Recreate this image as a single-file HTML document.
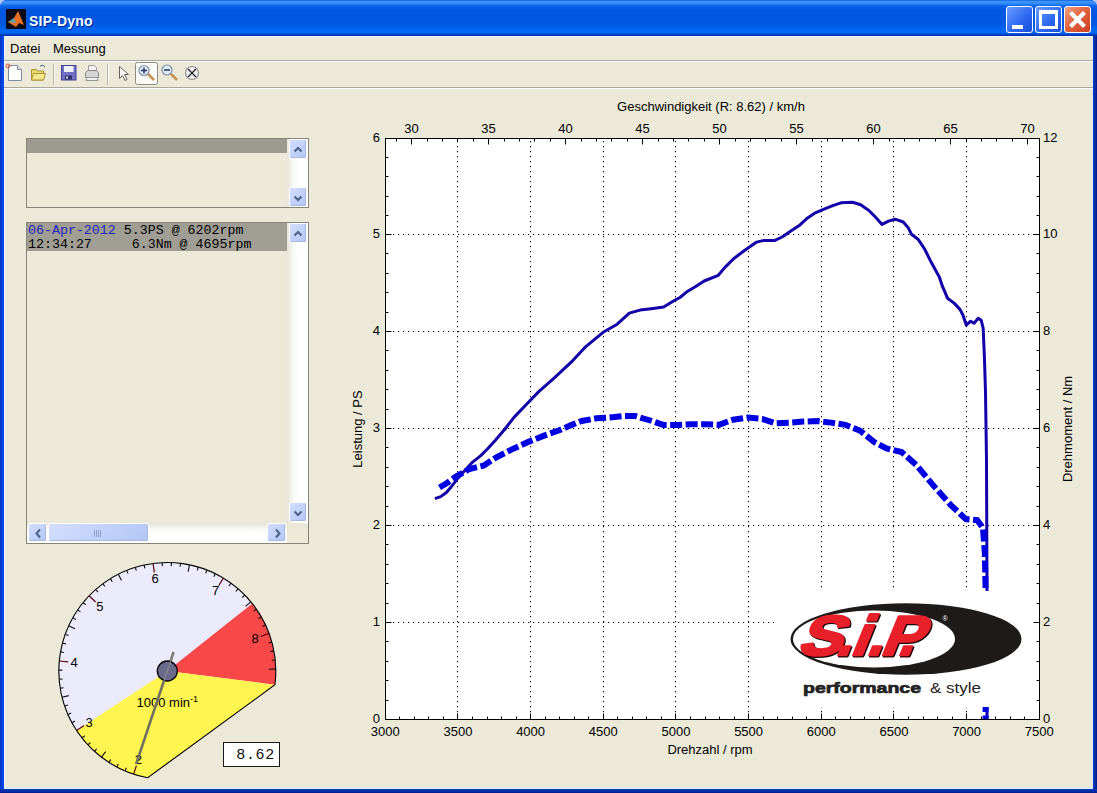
<!DOCTYPE html>
<html><head><meta charset="utf-8"><style>
html,body{margin:0;padding:0;width:1097px;height:793px;overflow:hidden;background:#b8c8f0;}
*{box-sizing:border-box;}
.f{font-family:"Liberation Sans",sans-serif;}
#win{position:absolute;left:0;top:0;width:1097px;height:793px;background:#0a3fd8;border-radius:7px 7px 0 0;overflow:hidden;}
#title{position:absolute;left:0;top:0;width:1097px;height:36px;
 background:linear-gradient(to bottom,#0050c8 0px,#3a92ff 1px,#3a92ff 3px,#0a62ea 6px,#0058e2 10px,#0058e2 24px,#0068f6 30px,#0066f2 33px,#0036b8 35px,#0030b0 36px);}
#client{position:absolute;left:4px;top:36px;width:1089px;height:753px;background:#ece9d8;}
.ttl{position:absolute;left:29px;top:12.6px;color:#f4ffff;font-weight:bold;font-size:14px;letter-spacing:0.2px;text-shadow:1px 1px 0 #0a1e8c;}
.btn{position:absolute;top:6px;width:27px;height:27px;border:1px solid #fff;border-radius:3px;}
.menu{position:absolute;top:5px;font-size:13px;color:#000;}
</style></head><body>
<div id="win" class="f">
 <div id="title">
  <div style="position:absolute;left:6px;top:9px;width:20px;height:20px;background:#0b0b18;">
   <svg width="20" height="20"><path d="M2 13 L8 9 L12 2 L15 9 L18 16 L13 14 L10 18 Z" fill="#e87020"/><path d="M2 13 L8 9 L10 14 Z" fill="#60a0b0"/></svg>
  </div>
  <div class="ttl">SIP-Dyno</div>
  <div class="btn" style="left:1006px;background:linear-gradient(135deg,#6a9cff,#2a66f0 60%,#1c50d8);"><div style="position:absolute;left:5px;top:18px;width:11px;height:4px;background:#fff;"></div></div>
  <div class="btn" style="left:1035px;background:linear-gradient(135deg,#6a9cff,#2a66f0 60%,#1c50d8);"><div style="position:absolute;left:3px;top:3px;width:19px;height:19px;border:3px solid #fff;border-top-width:4px;"></div></div>
  <div class="btn" style="left:1064px;background:linear-gradient(135deg,#f0a080,#e06040 50%,#c84020);">
   <svg width="25" height="25" style="position:absolute;left:0;top:0"><path d="M5.5 5.5 L19.5 19.5 M19.5 5.5 L5.5 19.5" stroke="#fff" stroke-width="4.2"/></svg></div>
 </div>
 <div style="position:absolute;left:0;top:36px;width:4px;height:757px;background:linear-gradient(to right,#0030c8,#0044e0 50%,#0a48e8);"></div>
 <div style="position:absolute;left:1093px;top:36px;width:4px;height:757px;background:linear-gradient(to right,#0a3ac0,#0a2ea8 50%,#001a90);"></div>
 <div style="position:absolute;left:0;top:789px;width:1097px;height:4px;background:linear-gradient(to bottom,#0a3ab8,#0a2ea8 50%,#001a90);"></div>
 <div id="client">
  <div style="position:absolute;left:0;top:0;width:1089px;height:1px;background:#f4f8ff;"></div>
  <div style="position:absolute;left:0;top:0;width:1px;height:753px;background:#e4f0fa;"></div>
  <div style="position:absolute;left:1088px;top:0;width:1px;height:753px;background:#dcecfc;"></div>
  <div style="position:absolute;left:0;top:751px;width:1089px;height:2px;background:#dcecfc;"></div>
  <div class="menu" style="left:6px;">Datei</div>
  <div class="menu" style="left:49px;">Messung</div>
  <div style="position:absolute;left:0;top:24px;width:1089px;height:1px;background:#aca899;"></div>
  <div style="position:absolute;left:0;top:25px;width:1089px;height:1px;background:#fff;"></div>
  <div style="position:absolute;left:0;top:51px;width:1089px;height:1px;background:#aca899;"></div>
  <div style="position:absolute;left:0;top:52px;width:1089px;height:1px;background:#fff;"></div>
 </div>
<svg width="220" height="28" style="position:absolute;left:0;top:60px">
<path d="M8.5 5.5h9l4 4v11h-13z" fill="#fff" stroke="#7a8aa0"/><path d="M17.5 5.5v4h4" fill="#e8e8e8" stroke="#7a8aa0"/><circle cx="8" cy="6" r="2" fill="none" stroke="#e05030" stroke-width="1"/>
<path d="M31.5 9.5h5l1 1.5h6v9h-12z" fill="#e8d870" stroke="#a89030"/><path d="M33.5 13.5h12l-2 6.5h-12z" fill="#f4e88c" stroke="#a89030"/><path d="M40 6 q3 -2 5 1" stroke="#406080" fill="none"/>
<path d="M53.5 4v21" stroke="#b8b4a0"/><path d="M54.5 4v21" stroke="#fff"/>
<rect x="61.5" y="5.5" width="14.5" height="14.5" fill="#7070c8" stroke="#404090"/><rect x="64" y="6" width="9.5" height="6" fill="#f0f0fa"/><rect x="65" y="15.5" width="7" height="4" fill="#303068"/><rect x="66" y="16.5" width="2" height="2" fill="#d0d0e8"/>
<path d="M88.5 5.5h6l2 2v5h-8z" fill="#f4f4f4" stroke="#a0a0a0"/><path d="M85.5 12.5l2-2h9l2 2v5h-13z" fill="#d4d4d4" stroke="#888"/><path d="M87 17.5h10l1 3h-12z" fill="#f0f0f0" stroke="#999"/>
<path d="M107.5 4v21" stroke="#b8b4a0"/><path d="M108.5 4v21" stroke="#fff"/>
<path d="M119.5 6.5v12l3-3 2.5 5 2-1-2.5-5h4z" fill="#fff" stroke="#606060"/>
<rect x="135.5" y="2.5" width="22" height="22" rx="2" fill="#fafaf6" stroke="#8c8c80"/>
<path d="M148 14 l6 6" stroke="#c89050" stroke-width="2.5"/><circle cx="144" cy="10.5" r="5" fill="#dfefff" stroke="#8090a0" stroke-width="1.2"/><path d="M141 10.5h6M144 7.5v6" stroke="#203060" stroke-width="1.5"/>
<path d="M171 14 l6 6" stroke="#c89050" stroke-width="2.5"/><circle cx="167" cy="10" r="5" fill="#dfefff" stroke="#8090a0" stroke-width="1.2"/><path d="M164 10h6" stroke="#203060" stroke-width="1.5"/>
<circle cx="192" cy="13" r="6.5" fill="#f0f0f0" stroke="#909090" stroke-width="1.2"/><path d="M188 9l8 8M196 9l-8 8" stroke="#202020" stroke-width="1.2"/>
</svg>
<div style="position:absolute;left:26px;top:138px;width:283px;height:70px;border:1px solid #858579;background:#ece9d8;"></div>
<div style="position:absolute;left:27px;top:139px;width:260px;height:14px;background:#9d9b90;"></div>
<div style="position:absolute;left:287px;top:139px;width:21px;height:68px;background:linear-gradient(to right,#e6e4d8,#f8f8f4 30%,#fff 55%);"></div>
<div style="position:absolute;border:1px solid #fff;border-radius:2px;background:linear-gradient(135deg,#d4defc 0%,#c2d2fa 50%,#b2c6f6 100%);box-shadow:inset -1px -1px 0 #a8b8e0;left:289px;top:139px;width:18px;height:20px;"><svg width="18" height="20" style="position:absolute;left:0;top:0"><path d="M4.5 11.5 L8 8 L11.5 11.5" stroke="#4d6185" stroke-width="2" fill="none"/></svg></div>
<div style="position:absolute;border:1px solid #fff;border-radius:2px;background:linear-gradient(135deg,#d4defc 0%,#c2d2fa 50%,#b2c6f6 100%);box-shadow:inset -1px -1px 0 #a8b8e0;left:289px;top:187px;width:18px;height:20px;"><svg width="18" height="20" style="position:absolute;left:0;top:0"><path d="M4.5 8.5 L8 12 L11.5 8.5" stroke="#4d6185" stroke-width="2" fill="none"/></svg></div>
<div style="position:absolute;left:26px;top:222px;width:283px;height:322px;border:1px solid #858579;background:#ece9d8;"></div>
<div style="position:absolute;left:27px;top:223px;width:260px;height:28px;background:#a09e94;"></div>
<div style="position:absolute;left:287px;top:223px;width:21px;height:300px;background:linear-gradient(to right,#e6e4d8,#f8f8f4 30%,#fff 55%);"></div>
<div style="position:absolute;border:1px solid #fff;border-radius:2px;background:linear-gradient(135deg,#d4defc 0%,#c2d2fa 50%,#b2c6f6 100%);box-shadow:inset -1px -1px 0 #a8b8e0;left:289px;top:223px;width:18px;height:20px;"><svg width="18" height="20" style="position:absolute;left:0;top:0"><path d="M4.5 11.5 L8 8 L11.5 11.5" stroke="#4d6185" stroke-width="2" fill="none"/></svg></div>
<div style="position:absolute;border:1px solid #fff;border-radius:2px;background:linear-gradient(135deg,#d4defc 0%,#c2d2fa 50%,#b2c6f6 100%);box-shadow:inset -1px -1px 0 #a8b8e0;left:289px;top:502px;width:18px;height:20px;"><svg width="18" height="20" style="position:absolute;left:0;top:0"><path d="M4.5 8.5 L8 12 L11.5 8.5" stroke="#4d6185" stroke-width="2" fill="none"/></svg></div>
<div style="position:absolute;left:27px;top:523px;width:260px;height:20px;background:linear-gradient(to bottom,#e6e4d8,#f8f8f4 30%,#fff 55%);"></div>
<div style="position:absolute;border:1px solid #fff;border-radius:2px;background:linear-gradient(135deg,#d4defc 0%,#c2d2fa 50%,#b2c6f6 100%);box-shadow:inset -1px -1px 0 #a8b8e0;left:28px;top:523px;width:19px;height:19px;"><svg width="19" height="19" style="position:absolute;left:0;top:0"><path d="M11 5.5 L7.5 9.5 L11 13.5" stroke="#4d6185" stroke-width="2" fill="none"/></svg></div>
<div style="position:absolute;border:1px solid #fff;border-radius:2px;background:linear-gradient(135deg,#d4defc 0%,#c2d2fa 50%,#b2c6f6 100%);box-shadow:inset -1px -1px 0 #a8b8e0;left:48px;top:523px;width:101px;height:19px;"><svg width="101" height="19" style="position:absolute;left:0;top:0"><path d="M45.5 6v7M47.5 6v7M49.5 6v7M51.5 6v7" stroke="#8ea2d0" stroke-width="1"/></svg></div>
<div style="position:absolute;border:1px solid #fff;border-radius:2px;background:linear-gradient(135deg,#d4defc 0%,#c2d2fa 50%,#b2c6f6 100%);box-shadow:inset -1px -1px 0 #a8b8e0;left:267px;top:523px;width:19px;height:19px;"><svg width="19" height="19" style="position:absolute;left:0;top:0"><path d="M8 5.5 L11.5 9.5 L8 13.5" stroke="#4d6185" stroke-width="2" fill="none"/></svg></div>
<div style="position:absolute;left:28px;top:224px;font-family:'Liberation Mono',monospace;font-size:13.3px;line-height:13.5px;white-space:pre;color:#000;"><span style="color:#2424b8">06-Apr-2012</span> 5.3PS @ 6202rpm
12:34:27     6.3Nm @ 4695rpm</div>
<div style="position:absolute;left:223px;top:742px;width:57px;height:25px;border:1px solid #1a1a1a;background:#fff;"></div>
<div style="position:absolute;left:226px;top:747px;width:49px;text-align:right;font-family:'Liberation Mono',monospace;font-size:15px;line-height:18px;color:#111;letter-spacing:0.7px;margin-right:-0.7px;">8.62</div>
 <svg width="1097" height="793" style="position:absolute;left:0;top:0">
<rect x="385.5" y="138.5" width="654.0" height="581.0" fill="#fff"/>
<path d="M457.5 141V719.5M530.5 141V719.5M603.5 141V719.5M675.5 141V719.5M748.5 141V719.5M821.5 141V719.5M893.5 141V719.5M966.5 141V719.5M388 622.5H1039.5M388 525.5H1039.5M388 428.5H1039.5M388 331.5H1039.5M388 234.5H1039.5" stroke="#000" stroke-width="1.1" stroke-dasharray="1.2 3.8" fill="none"/>
<polyline points="434.9,498.6 440.7,496.6 446.4,492.5 451.3,486.7 457.0,479.3 464.4,471.1 472.6,462.1 480.8,455.6 487.4,449.0 495.6,440.0 505.0,429.0 514.2,417.1 526.3,404.5 538.5,391.9 554.6,377.7 572.8,360.6 584.9,347.4 603.1,332.3 617.2,324.2 629.3,313.1 640.0,310.1 651.3,308.7 663.6,307.0 674.3,300.5 680.0,297.5 687.7,291.2 695.3,286.8 704.2,281.0 718.3,275.3 724.7,267.6 733.6,258.7 743.8,251.0 756.6,242.1 763.0,240.6 774.4,240.6 782.1,237.0 792.3,230.0 800.0,224.9 807.6,217.9 815.3,212.8 824.6,208.9 832.8,205.6 841.0,202.8 852.5,202.3 860.7,204.8 868.9,210.5 875.4,217.0 882.0,224.4 888.5,221.1 895.1,219.2 903.3,222.0 908.2,227.7 911.5,234.3 918.0,239.2 924.6,249.0 931.1,262.1 939.3,276.9 942.6,286.7 947.5,298.2 954.1,303.1 960.0,309.4 963.0,315.2 966.3,325.2 970.6,321.2 974.1,323.2 978.2,318.2 981.2,320.2 983.2,328.3 984.5,360.0 985.5,392.0 986.5,460.0 987.0,590.0 987.0,719.0" fill="none" stroke="#1400a8" stroke-width="3" stroke-linejoin="round"/>
<polyline points="439.5,487.5 447.0,483.0 456.0,476.5 469.5,469.0 484.0,465.4 496.0,457.5 513.9,448.4 529.0,441.6 544.1,435.6 559.3,430.3 570.0,425.6 581.7,421.0 596.3,418.3 609.4,417.6 624.0,416.1 635.6,416.1 650.2,420.5 663.3,424.9 677.9,424.9 691.1,424.2 705.6,424.2 718.8,424.9 733.1,419.7 747.7,417.5 762.3,419.0 775.4,423.3 790.0,422.6 803.1,421.6 817.7,421.1 830.9,422.6 845.4,424.8 860.0,430.6 874.6,442.3 886.5,448.4 901.6,452.1 916.7,465.4 935.6,488.1 950.8,505.1 965.9,519.1 977.2,520.2 982.9,527.8 984.8,552.4 985.6,590.2 985.6,719.0" fill="none" stroke="#0000e0" stroke-width="6" stroke-dasharray="12 3.5"/>
<g>
<rect x="774" y="591" width="265" height="116" fill="#fff"/>
<ellipse cx="906" cy="639" rx="115.5" ry="35.8" fill="#1e1a1a"/>
<ellipse cx="874" cy="639" rx="81" ry="28.5" fill="#fff"/>
<g transform="translate(0,655.4) skewX(-22) translate(0,-655.4)">
<g transform="translate(1.4,1.1199999999999999)" fill="#1a0000" stroke="#1a0000" stroke-width="3.0" stroke-linejoin="round" font-family="Liberation Sans" font-weight="bold" font-size="56">
<text x="796" y="654.6" textLength="44" lengthAdjust="spacingAndGlyphs">S</text>
<text x="834.5" y="654.6">.</text>
<text x="849" y="654.6" textLength="17" lengthAdjust="spacingAndGlyphs">i</text>
<text x="865.5" y="654.6">.</text>
<text x="879" y="654.6" textLength="41" lengthAdjust="spacingAndGlyphs">P</text>
<text x="896.5" y="654.6">.</text>
</g>
<g transform="translate(0,0.0)" fill="#e8202a" stroke="#e8202a" stroke-width="2.6" stroke-linejoin="round" font-family="Liberation Sans" font-weight="bold" font-size="56">
<text x="796" y="654.6" textLength="44" lengthAdjust="spacingAndGlyphs">S</text>
<text x="834.5" y="654.6">.</text>
<text x="849" y="654.6" textLength="17" lengthAdjust="spacingAndGlyphs">i</text>
<text x="865.5" y="654.6">.</text>
<text x="879" y="654.6" textLength="41" lengthAdjust="spacingAndGlyphs">P</text>
<text x="896.5" y="654.6">.</text>
</g>
</g>
<text x="942.5" y="621" font-family="Liberation Sans" font-size="7" fill="#fff">®</text>
<text x="803" y="693" font-family="Liberation Sans" font-weight="bold" font-size="15" fill="#222" stroke="#222" stroke-width="0.7" textLength="118" lengthAdjust="spacingAndGlyphs">performance</text>
<text x="930" y="693" font-family="Liberation Sans" font-size="15" fill="#222" textLength="51" lengthAdjust="spacingAndGlyphs">&amp; style</text>
</g>
<rect x="385.5" y="138.5" width="654.0" height="581.0" fill="none" stroke="#000" stroke-width="1"/>
<path d="M385.5 719.5v-6M399.5 719.5v-3M414.5 719.5v-3M428.5 719.5v-3M443.5 719.5v-3M457.5 719.5v-6M472.5 719.5v-3M487.5 719.5v-3M501.5 719.5v-3M516.5 719.5v-3M530.5 719.5v-6M545.5 719.5v-3M559.5 719.5v-3M574.5 719.5v-3M588.5 719.5v-3M603.5 719.5v-6M617.5 719.5v-3M632.5 719.5v-3M646.5 719.5v-3M661.5 719.5v-3M675.5 719.5v-6M690.5 719.5v-3M705.5 719.5v-3M719.5 719.5v-3M734.5 719.5v-3M748.5 719.5v-6M763.5 719.5v-3M777.5 719.5v-3M792.5 719.5v-3M806.5 719.5v-3M821.5 719.5v-6M835.5 719.5v-3M850.5 719.5v-3M864.5 719.5v-3M879.5 719.5v-3M893.5 719.5v-6M908.5 719.5v-3M923.5 719.5v-3M937.5 719.5v-3M952.5 719.5v-3M966.5 719.5v-6M981.5 719.5v-3M995.5 719.5v-3M1010.5 719.5v-3M1024.5 719.5v-3M1039.5 719.5v-6M396.5 138.5v3M411.5 138.5v6M427.5 138.5v3M442.5 138.5v3M457.5 138.5v3M473.5 138.5v3M488.5 138.5v6M504.5 138.5v3M519.5 138.5v3M534.5 138.5v3M550.5 138.5v3M565.5 138.5v6M581.5 138.5v3M596.5 138.5v3M611.5 138.5v3M627.5 138.5v3M642.5 138.5v6M658.5 138.5v3M673.5 138.5v3M688.5 138.5v3M704.5 138.5v3M719.5 138.5v6M735.5 138.5v3M750.5 138.5v3M765.5 138.5v3M781.5 138.5v3M796.5 138.5v6M812.5 138.5v3M827.5 138.5v3M842.5 138.5v3M858.5 138.5v3M873.5 138.5v6M889.5 138.5v3M904.5 138.5v3M919.5 138.5v3M935.5 138.5v3M950.5 138.5v6M966.5 138.5v3M981.5 138.5v3M996.5 138.5v3M1012.5 138.5v3M1027.5 138.5v6M385.5 719.5h6M1039.5 719.5h-6M385.5 700.5h3M1039.5 700.5h-3M385.5 680.5h3M1039.5 680.5h-3M385.5 661.5h3M1039.5 661.5h-3M385.5 641.5h3M1039.5 641.5h-3M385.5 622.5h6M1039.5 622.5h-6M385.5 603.5h3M1039.5 603.5h-3M385.5 583.5h3M1039.5 583.5h-3M385.5 564.5h3M1039.5 564.5h-3M385.5 544.5h3M1039.5 544.5h-3M385.5 525.5h6M1039.5 525.5h-6M385.5 506.5h3M1039.5 506.5h-3M385.5 486.5h3M1039.5 486.5h-3M385.5 467.5h3M1039.5 467.5h-3M385.5 447.5h3M1039.5 447.5h-3M385.5 428.5h6M1039.5 428.5h-6M385.5 409.5h3M1039.5 409.5h-3M385.5 389.5h3M1039.5 389.5h-3M385.5 370.5h3M1039.5 370.5h-3M385.5 350.5h3M1039.5 350.5h-3M385.5 331.5h6M1039.5 331.5h-6M385.5 312.5h3M1039.5 312.5h-3M385.5 292.5h3M1039.5 292.5h-3M385.5 273.5h3M1039.5 273.5h-3M385.5 253.5h3M1039.5 253.5h-3M385.5 234.5h6M1039.5 234.5h-6M385.5 215.5h3M1039.5 215.5h-3M385.5 196.5h3M1039.5 196.5h-3M385.5 176.5h3M1039.5 176.5h-3M385.5 157.5h3M1039.5 157.5h-3M385.5 138.5h6M1039.5 138.5h-6" stroke="#000" stroke-width="1" fill="none"/>
<text x="385.3" y="736" text-anchor="middle" font-family="Liberation Sans" font-size="13" fill="#000">3000</text>
<text x="458.0" y="736" text-anchor="middle" font-family="Liberation Sans" font-size="13" fill="#000">3500</text>
<text x="530.6" y="736" text-anchor="middle" font-family="Liberation Sans" font-size="13" fill="#000">4000</text>
<text x="603.3" y="736" text-anchor="middle" font-family="Liberation Sans" font-size="13" fill="#000">4500</text>
<text x="676.0" y="736" text-anchor="middle" font-family="Liberation Sans" font-size="13" fill="#000">5000</text>
<text x="748.6" y="736" text-anchor="middle" font-family="Liberation Sans" font-size="13" fill="#000">5500</text>
<text x="821.3" y="736" text-anchor="middle" font-family="Liberation Sans" font-size="13" fill="#000">6000</text>
<text x="894.0" y="736" text-anchor="middle" font-family="Liberation Sans" font-size="13" fill="#000">6500</text>
<text x="966.6" y="736" text-anchor="middle" font-family="Liberation Sans" font-size="13" fill="#000">7000</text>
<text x="1039.3" y="736" text-anchor="middle" font-family="Liberation Sans" font-size="13" fill="#000">7500</text>
<text x="411.6" y="133" text-anchor="middle" font-family="Liberation Sans" font-size="13" fill="#000">30</text>
<text x="488.6" y="133" text-anchor="middle" font-family="Liberation Sans" font-size="13" fill="#000">35</text>
<text x="565.6" y="133" text-anchor="middle" font-family="Liberation Sans" font-size="13" fill="#000">40</text>
<text x="642.6" y="133" text-anchor="middle" font-family="Liberation Sans" font-size="13" fill="#000">45</text>
<text x="719.6" y="133" text-anchor="middle" font-family="Liberation Sans" font-size="13" fill="#000">50</text>
<text x="796.6" y="133" text-anchor="middle" font-family="Liberation Sans" font-size="13" fill="#000">55</text>
<text x="873.6" y="133" text-anchor="middle" font-family="Liberation Sans" font-size="13" fill="#000">60</text>
<text x="950.6" y="133" text-anchor="middle" font-family="Liberation Sans" font-size="13" fill="#000">65</text>
<text x="1027.6" y="133" text-anchor="middle" font-family="Liberation Sans" font-size="13" fill="#000">70</text>
<text x="380" y="723.3" text-anchor="end" font-family="Liberation Sans" font-size="13" fill="#000">0</text>
<text x="1043" y="723.3" text-anchor="start" font-family="Liberation Sans" font-size="13" fill="#000">0</text>
<text x="380" y="626.3" text-anchor="end" font-family="Liberation Sans" font-size="13" fill="#000">1</text>
<text x="1043" y="626.3" text-anchor="start" font-family="Liberation Sans" font-size="13" fill="#000">2</text>
<text x="380" y="529.3" text-anchor="end" font-family="Liberation Sans" font-size="13" fill="#000">2</text>
<text x="1043" y="529.3" text-anchor="start" font-family="Liberation Sans" font-size="13" fill="#000">4</text>
<text x="380" y="432.3" text-anchor="end" font-family="Liberation Sans" font-size="13" fill="#000">3</text>
<text x="1043" y="432.3" text-anchor="start" font-family="Liberation Sans" font-size="13" fill="#000">6</text>
<text x="380" y="335.3" text-anchor="end" font-family="Liberation Sans" font-size="13" fill="#000">4</text>
<text x="1043" y="335.3" text-anchor="start" font-family="Liberation Sans" font-size="13" fill="#000">8</text>
<text x="380" y="238.3" text-anchor="end" font-family="Liberation Sans" font-size="13" fill="#000">5</text>
<text x="1043" y="238.3" text-anchor="start" font-family="Liberation Sans" font-size="13" fill="#000">10</text>
<text x="380" y="142.3" text-anchor="end" font-family="Liberation Sans" font-size="13" fill="#000">6</text>
<text x="1043" y="142.3" text-anchor="start" font-family="Liberation Sans" font-size="13" fill="#000">12</text>
<text x="711" y="111" text-anchor="middle" font-family="Liberation Sans" font-size="13" fill="#000">Geschwindigkeit (R: 8.62) / km/h</text>
<text x="710" y="754" text-anchor="middle" font-family="Liberation Sans" font-size="13" fill="#000">Drehzahl / rpm</text>
<text transform="translate(362,429) rotate(-90)" text-anchor="middle" font-family="Liberation Sans" font-size="13" fill="#000">Leistung / PS</text>
<text transform="translate(1072,429) rotate(-90)" text-anchor="middle" font-family="Liberation Sans" font-size="13" fill="#000">Drehmoment / Nm</text>
<clipPath id="gclip"><path d="M147.71,777.72A108.5,108.5 0 1 1 274.92,684.79Z"/></clipPath>
<g clip-path="url(#gclip)">
<rect x="56.80000000000001" y="560.5" width="221.0" height="221.0" fill="#ecebfc"/>
<path d="M167.3,671.0L252.33,603.61A108.5,108.5 0 0 1 274.92,684.79Z" fill="#f84848"/>
<path d="M167.3,671.0L72.44,733.31L147.3,799.5L295.8,799.5L279.88,685.42Z" fill="#fff550"/>
</g>
<path d="M147.71,777.72A108.5,108.5 0 1 1 274.92,684.79Z" fill="none" stroke="#000" stroke-width="1.1"/>
<path d="M125.0,770.9L126.4,767.7M116.8,767.0L118.4,763.9M108.9,762.4L110.8,759.5M101.4,757.2L105.7,751.6M94.4,751.3L96.7,748.8M87.9,744.9L90.4,742.5M81.9,738.0L84.7,735.8M71.9,722.7L75.0,721.1M67.9,714.5L71.1,713.1M64.6,706.0L67.9,704.9M62.0,697.2L68.8,695.6M60.2,688.3L63.6,687.7M59.1,679.2L62.6,679.0M58.8,670.1L62.3,670.1M60.5,651.9L63.9,652.5M62.5,643.0L65.9,643.9M65.2,634.3L68.5,635.5M68.6,625.8L75.0,628.7M72.8,617.7L75.8,619.4M77.6,609.9L80.5,611.9M83.1,602.6L85.8,604.8M95.7,589.5L98.0,592.1M102.8,583.7L104.9,586.5M110.4,578.6L112.2,581.6M118.4,574.2L121.5,580.4M126.7,570.4L128.0,573.6M135.3,567.3L136.3,570.7M144.1,565.0L144.9,568.4M162.2,562.6L162.4,566.1M171.4,562.6L171.2,566.1M180.5,563.3L180.1,566.8M189.5,564.8L188.1,571.6M198.3,567.0L197.3,570.4M207.0,570.0L205.7,573.3M215.3,573.7L213.8,576.8M231.0,583.1L228.9,586.0M238.1,588.8L235.8,591.5M244.8,595.1L242.3,597.5M250.9,601.8L245.5,606.3M256.4,609.1L253.5,611.1M261.3,616.8L258.3,618.6M265.5,624.9L262.4,626.4M271.9,642.1L268.5,643.0M273.9,650.9L270.5,651.6M275.2,660.0L271.8,660.3M275.8,669.1L268.8,669.2" stroke="#111" stroke-width="1.1"/>
<path d="M133.6,774.1L136.4,765.6M76.6,730.6L84.1,725.6M59.3,661.0L68.2,661.8M89.1,595.8L95.6,602.0M153.1,563.4L154.3,572.4M223.3,578.1L218.7,585.8M269.1,633.4L260.6,636.5" stroke="#600010" stroke-width="1.2"/>
<text x="138.3" y="764.4" text-anchor="middle" font-family="Liberation Sans" font-size="13" fill="#000">2</text>
<text x="89.2" y="726.8" text-anchor="middle" font-family="Liberation Sans" font-size="13" fill="#000">3</text>
<text x="74.2" y="666.9" text-anchor="middle" font-family="Liberation Sans" font-size="13" fill="#000">4</text>
<text x="99.9" y="610.7" text-anchor="middle" font-family="Liberation Sans" font-size="13" fill="#000">5</text>
<text x="155.1" y="582.8" text-anchor="middle" font-family="Liberation Sans" font-size="13" fill="#000">6</text>
<text x="215.6" y="595.4" text-anchor="middle" font-family="Liberation Sans" font-size="13" fill="#000">7</text>
<text x="255.0" y="643.1" text-anchor="middle" font-family="Liberation Sans" font-size="13" fill="#000">8</text>
<text x="167.3" y="707" text-anchor="middle" font-family="Liberation Sans" font-size="13" fill="#000">1000 min<tspan dy="-5" font-size="9">-1</tspan></text>
<line x1="136.2" y1="763.9" x2="173.6" y2="652.0" stroke="#72725e" stroke-width="2.6"/>
<circle cx="167.3" cy="671.0" r="10" fill="#6a6a8c" stroke="#000" stroke-width="1.3"/>
<line x1="163.5" y1="682.4" x2="173.6" y2="652.0" stroke="#8a8a84" stroke-width="1.2"/>
 </svg>
</div>
</body></html>
